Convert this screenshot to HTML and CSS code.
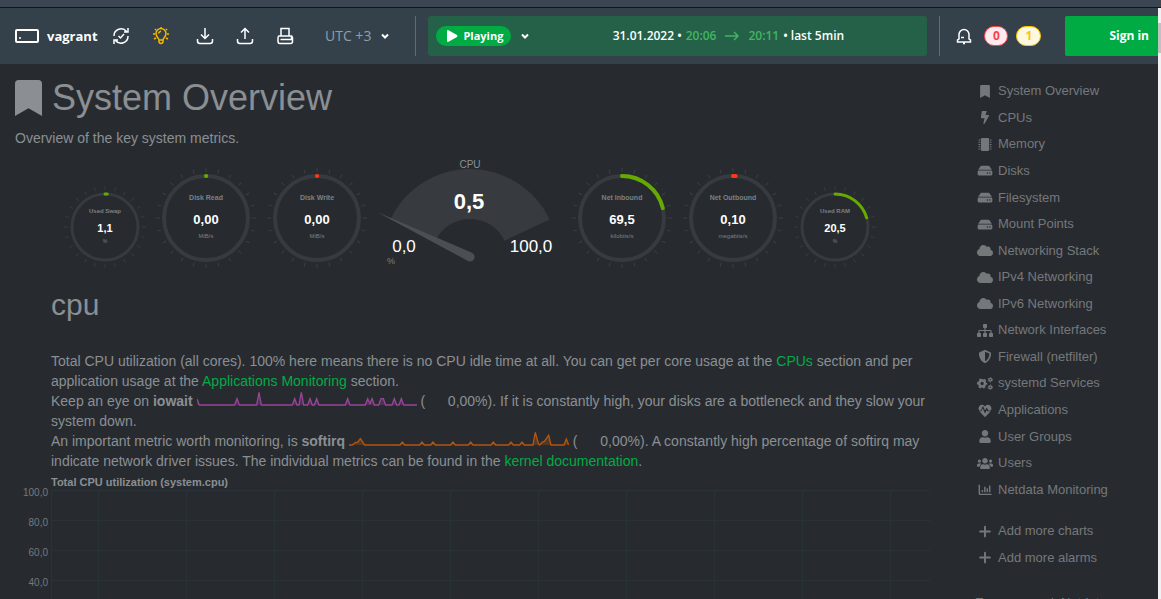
FILE: index.html
```html
<!DOCTYPE html>
<html lang="en">
<head>
<meta charset="utf-8">
<title>vagrant - System Overview</title>
<link rel="stylesheet" href="styles.css">
</head>
<body>
<svg class="defs" aria-hidden="true">
  <symbol id="bookmark" viewBox="0 0 384 512"><path d="M0 512V48C0 21.49 21.49 0 48 0h288c26.51 0 48 21.49 48 48v464L192 400 0 512z"/></symbol>
  <symbol id="bolt" viewBox="0 0 320 512"><path d="M296 160H180.6l42.6-129.8C227.2 15 215.7 0 200 0H56C44 0 33.8 8.9 32.2 20.8l-32 240C-1.7 275.2 9.5 288 24 288h118.7L96.6 482.5c-3.6 15.2 8 29.5 23.3 29.5 8.4 0 16.4-4.4 20.8-12l176-304c9.3-15.9-2.2-36-20.7-36z"/></symbol>
  <symbol id="chip" viewBox="0 0 512 512"><path d="M144 0h224a48 48 0 0 1 48 48v416a48 48 0 0 1-48 48H144a48 48 0 0 1-48-48V48a48 48 0 0 1 48-48z"/><path d="M0 80h72M0 168h72M0 256h72M0 344h72M0 432h72M440 80h72M440 168h72M440 256h72M440 344h72M440 432h72" stroke="currentColor" stroke-width="40"/></symbol>
  <symbol id="hdd" viewBox="0 0 576 512"><path d="M576 304v96c0 26.51-21.49 48-48 48H48c-26.51 0-48-21.49-48-48v-96c0-26.51 21.49-48 48-48h480c26.51 0 48 21.49 48 48zm-48-80a79.557 79.557 0 0 1 30.777 6.165L462.25 85.374A48.003 48.003 0 0 0 422.311 64H153.689a48 48 0 0 0-39.938 21.374L17.223 230.165A79.557 79.557 0 0 1 48 224h480zm-48 96c-17.673 0-32 14.327-32 32s14.327 32 32 32 32-14.327 32-32-14.327-32-32-32zm-96 0c-17.673 0-32 14.327-32 32s14.327 32 32 32 32-14.327 32-32-14.327-32-32-32z"/></symbol>
  <symbol id="cloud" viewBox="0 0 640 512"><path d="M537.6 226.6c4.1-10.7 6.4-22.4 6.4-34.6 0-53-43-96-96-96-19.7 0-38.1 6-53.3 16.2C367 64.2 315.3 32 256 32c-88.4 0-160 71.6-160 160 0 2.7.1 5.4.2 8.1C40.2 219.8 0 273.2 0 336c0 79.5 64.5 144 144 144h368c70.7 0 128-57.3 128-128 0-61.9-44-113.6-102.4-125.4z"/></symbol>
  <symbol id="sitemap" viewBox="0 0 640 512"><rect x="240" width="160" height="160" rx="30"/><rect y="352" width="160" height="160" rx="30"/><rect x="240" y="352" width="160" height="160" rx="30"/><rect x="480" y="352" width="160" height="160" rx="30"/><path d="M320 150v210M80 360v-80q0-24 24-24h432q24 0 24 24v80" fill="none" stroke="currentColor" stroke-width="48"/></symbol>
  <symbol id="shield" viewBox="0 0 512 512"><path d="M466.5 83.7l-192-80a48.15 48.15 0 0 0-36.9 0l-192 80C27.7 91.1 16 108.6 16 128c0 198.5 114.5 335.7 221.5 380.3 11.8 4.9 25.1 4.9 36.9 0C360.1 472.6 496 349.3 496 128c0-19.4-11.7-36.9-29.5-44.3zM256.1 446.3l-.1-381 175.9 73.3c-3.3 151.4-82.1 261.1-175.8 307.7z"/></symbol>
  <symbol id="cogs" viewBox="0 0 640 512"><g fill="none" stroke="currentColor"><circle cx="205" cy="256" r="118" stroke-width="100"/><circle cx="205" cy="256" r="180" stroke-width="50" pathLength="12" stroke-dasharray="1 1" stroke-dashoffset=".5"/><circle cx="530" cy="104" r="56" stroke-width="52"/><circle cx="530" cy="104" r="90" stroke-width="32" pathLength="12" stroke-dasharray="1 1"/><circle cx="530" cy="408" r="56" stroke-width="52"/><circle cx="530" cy="408" r="90" stroke-width="32" pathLength="12" stroke-dasharray="1 1"/></g></symbol>
  <symbol id="heart" viewBox="0 0 512 512"><path d="M320 244l-64 128-92-205-49 121H30l208 212q18 18 36 0l208-212H347zM473 74c-55-57-145-57-200 0l-17 18-17-18c-55-57-145-57-200 0-48 50-50 129-8 182h62l65-158q16-20 30 0l70 160 50-98q15-16 29 0l44 96h100c42-53 40-132-8-182z"/></symbol>
  <symbol id="user" viewBox="0 0 448 512"><path d="M224 256c70.7 0 128-57.3 128-128S294.7 0 224 0 96 57.3 96 128s57.3 128 128 128zm89.6 32h-16.7c-22.2 10.2-46.9 16-72.9 16s-50.6-5.8-72.9-16h-16.7C60.2 288 0 348.2 0 422.4V464c0 26.5 21.5 48 48 48h352c26.5 0 48-21.5 48-48v-41.6c0-74.2-60.2-134.4-134.4-134.4z"/></symbol>
  <symbol id="users" viewBox="0 0 640 512"><path d="M96 224c35.3 0 64-28.7 64-64s-28.7-64-64-64-64 28.7-64 64 28.7 64 64 64zm448 0c35.3 0 64-28.7 64-64s-28.7-64-64-64-64 28.7-64 64 28.7 64 64 64zm32 32h-64c-17.6 0-33.5 7.1-45.1 18.6 40.3 22.1 68.9 62 75.1 109.4h66c17.7 0 32-14.3 32-32v-32c0-35.3-28.7-64-64-64zm-256 0c61.9 0 112-50.1 112-112S381.9 32 320 32 208 82.1 208 144s50.1 112 112 112zm76.8 32h-8.3c-20.8 10-43.9 16-68.5 16s-47.6-6-68.5-16h-8.3C179.6 288 128 339.6 128 403.2V432c0 26.5 21.5 48 48 48h288c26.5 0 48-21.5 48-48v-28.8c0-63.6-51.6-115.2-115.2-115.2zm-223.7-13.4C161.5 263.1 145.6 256 128 256H64c-35.3 0-64 28.7-64 64v32c0 17.7 14.3 32 32 32h65.9c6.3-47.4 34.9-87.3 75.2-109.4z"/></symbol>
  <symbol id="bars" viewBox="0 0 512 512"><path d="M32 64v352q0 32 32 32h448M152 368v-96M248 368V144M344 368V208M440 368V96" fill="none" stroke="currentColor" stroke-width="56"/></symbol>
  <symbol id="plus" viewBox="0 0 448 512"><path d="M224 64v384M32 256h384" fill="none" stroke="currentColor" stroke-width="76" stroke-linecap="round"/></symbol>
  <symbol id="chevron" viewBox="0 0 8 8"><path d="M1 2.5 4 5.5 7 2.5" fill="none" stroke="currentColor" stroke-width="2"/></symbol>
</svg>

<div class="chrome-edge"></div>
<div class="viewport">
<div class="app">
  <header class="topbar">
    <div class="node">
      <svg class="node-icon" viewBox="0 0 24 14"><rect x="1" y="1" width="22" height="12" rx="1" fill="none" stroke="currentColor" stroke-width="2"/><circle cx="5" cy="9" r="1"/></svg>
      <span>vagrant</span>
    </div>
    <div class="tools">
      <button class="tool" aria-label="Check for updates"><svg viewBox="0 0 18 18"><path d="M2 9A7 7 0 0 1 14.5 4.5M16 1v4h-4M16 9A7 7 0 0 1 3.500 13.500M2 17v-4h4M6.500 9l2 2 3.500-4"/></svg></button>
      <button class="tool tool-tip" aria-label="News"><svg viewBox="0 0 18 18"><path d="M7 13c0-2-3-3-3-6.500a5 5 0 0 1 10 0C14 10 11 11 11 13v2q-2 3-4 0zM7 13h4M6.500 6.500Q7 4.500 9 4.200M9 1V0M3 2l1 1M15 2l-1 1M1 7h2M15 7h2M2 12l2-1M16 12l-2-1"/></svg></button>
    </div>
    <div class="tools tools-io">
      <button class="tool" aria-label="Import"><svg viewBox="0 0 18 18"><path d="M9 1v10M5 7.500l4 4 4-4M1.500 12v2q0 2.500 2.500 2.500h10q2.500 0 2.500-2.500v-2"/></svg></button>
      <button class="tool" aria-label="Export"><svg viewBox="0 0 18 18"><path d="M9 12V2M5 5.500l4-4 4 4M1.500 12v2q0 2.500 2.500 2.500h10q2.500 0 2.500-2.500v-2"/></svg></button>
      <button class="tool" aria-label="Print"><svg viewBox="0 0 18 18"><path d="M5 8.500V1.500h8v7M3 9h12.500v3.500h-11M15.500 9.500q1 0 1 1v4q0 2-2 2H4q-2 0-2-2V12q0-3 1-3"/></svg></button>
    </div>
    <button class="zone">UTC +3 <svg class="chevron"><use href="#chevron"/></svg></button>
    <div class="divider"></div>
    <div class="timebar">
      <button class="playing"><svg viewBox="0 0 12 12"><path d="M1 1q0-1 1-1l9 5q1 1 0 2l-9 5q-1 0-1-1z"/></svg>Playing</button>
      <button class="plain" aria-label="Playback options"><svg class="chevron"><use href="#chevron"/></svg></button>
      <button class="range"><span>31.01.2022 •</span><span class="time">20:06</span><svg class="arrow" viewBox="0 0 14 10"><path d="M0 5h13M9 1l4 4-4 4"/></svg><span class="time">20:11</span><span>• last 5min</span></button>
    </div>
    <div class="divider"></div>
    <div class="alarms">
      <button class="tool" aria-label="Alarms"><svg viewBox="0 0 18 18"><path d="M4 12V7.500a5 5 0 0 1 10 0V12l1.500 1v2h-13v-2zM6 10.500h3M8 16.500h2"/></svg></button>
      <span class="badge badge-red">0</span>
      <span class="badge badge-yellow">1</span>
    </div>
    <button class="signin">Sign in</button>
  </header>

  <div class="body">
    <main class="content">
      <h1><svg class="title-icon"><use href="#bookmark"/></svg>System Overview</h1>
      <p class="lead">Overview of the key system metrics.</p>

      <div class="gauges">
        <svg class="pie pie-small" viewBox="-46 -46 92 92"><circle class="ticks" r="39" pathLength="24"/><circle class="track" r="33"/><circle class="arc green" r="33" pathLength="100" stroke-dasharray="1.1 200"/><text class="name" y="-14">Used Swap</text><text class="value" y="5">1,1</text><text class="unit" y="16">%</text></svg>
        <svg class="pie" viewBox="-55 -56 111 111"><circle class="ticks" r="48" pathLength="24"/><circle class="track" r="42"/><circle class="arc green" r="42" pathLength="100" stroke-dasharray=".1 200"/><text class="name" y="-18">Disk Read</text><text class="value" y="6">0,00</text><text class="unit" y="20">MiB/s</text></svg>
        <svg class="pie" viewBox="-55 -56 111 111"><circle class="ticks" r="48" pathLength="24"/><circle class="track" r="42"/><circle class="arc red" r="42" pathLength="100" stroke-dasharray=".1 200"/><text class="name" y="-18">Disk Write</text><text class="value" y="6">0,00</text><text class="unit" y="20">MiB/s</text></svg>
        <svg class="dial" viewBox="-97 -99 194 115">
          <path class="face" d="M-79.600-37.500A88 88 0 0 1 79.600-37.500L34.400-16.200A38 38 0 0 0-34.400-16.200z"/>
          <path d="M-79-38-70-34" stroke="#2f5a96"/>
          <path class="needle" d="M-93-45 2-4.200A4.500 4.500 0 1 1-2 4z"/>
          <text class="dial-name" y="-89">CPU</text>
          <text class="dial-value" x="-1" y="-48">0,5</text>
          <text class="dial-limit" x="-66" y="-5">0,0</text>
          <text class="dial-limit" x="61" y="-5">100,0</text>
          <text class="dial-unit" x="-79" y="7">%</text>
        </svg>
        <svg class="pie" viewBox="-55 -56 111 111"><circle class="ticks" r="48" pathLength="24"/><circle class="track" r="42"/><circle class="arc green" r="42" pathLength="100" stroke-dasharray="21.200 200"/><text class="name" y="-18">Net Inbound</text><text class="value" y="6">69,5</text><text class="unit" y="20">kilobits/s</text></svg>
        <svg class="pie" viewBox="-55 -56 111 111"><circle class="ticks" r="48" pathLength="24"/><circle class="track" r="42"/><circle class="arc red" r="42" pathLength="100" stroke-dasharray="1 200"/><text class="name" y="-18">Net Outbound</text><text class="value" y="6">0,10</text><text class="unit" y="20">megabits/s</text></svg>
        <svg class="pie pie-small" viewBox="-46 -46 92 92"><circle class="ticks" r="39" pathLength="24"/><circle class="track" r="33"/><circle class="arc green" r="33" pathLength="100" stroke-dasharray="20.500 200"/><text class="name" y="-14">Used RAM</text><text class="value" y="5">20,5</text><text class="unit" y="16">%</text></svg>
      </div>

      <section class="submenu">
        <h2>cpu</h2>
        <p class="info">Total CPU utilization (all cores). 100% here means there is no CPU idle time at all. You can get per core usage at the <a href="#cpus">CPUs</a> section and per application usage at the <a href="#apps">Applications Monitoring</a> section.<br>
        Keep an eye on <b>iowait</b> <svg class="spark spark-iowait" viewBox="0 0 660 45"><path stroke="none" d="M0 42V24L7 42H113L120 23 127 42H179L186 4 193 42H286L293 23 300 42H306L313 4 320 42H332L339 23 346 42H352L359 23 366 42H445L452 23 459 42H505L512 23 519 38 525 23 532 42H545L552 23H559L566 42H585L592 23 599 42H606L613 23 620 42z"/><path fill="none" d="M0 24 7 42H113L120 23 127 42H179L186 4 193 42H286L293 23 300 42H306L313 4 320 42H332L339 23 346 42H352L359 23 366 42H445L452 23 459 42H505L512 23 519 38 525 23 532 42H545L552 23H559L566 42H585L592 23 599 42H606L613 23 620 42H660"/></svg> (<span class="live">0,00</span>%). If it is constantly high, your disks are a bottleneck and they slow your system down.<br>
        An important metric worth monitoring, is <b>softirq</b> <svg class="spark spark-softirq" viewBox="0 0 660 45"><path d="M0 42H10L20 34H26L34 23 47 42H153L160 33 167 42H212L219 33 226 42H245L252 33 259 42H305L312 33 319 42H358L365 33 372 42H426L433 33 440 42H479L486 33 493 42H512L519 33 526 42H552L559 4 568 38 572 42 580 33 586 31 599 13 606 42H645L652 24 659 42"/></svg> (<span class="live">0,00</span>%). A constantly high percentage of softirq may indicate network driver issues. The individual metrics can be found in the <a href="#kernel">kernel documentation</a>.</p>
      </section>

      <section class="chart">
        <div class="axis"><span>100,0</span><span>80,0</span><span>60,0</span><span>40,0</span></div>
        <div class="chart-main">
          <h3>Total CPU utilization (system.cpu)</h3>
          <div class="plot"></div>
        </div>
      </section>
    </main>

    <nav class="sidebar">
      <ul class="menu">
        <li><a href="#system"><svg><use href="#bookmark"/></svg>System Overview</a></li>
        <li><a href="#cpus"><svg><use href="#bolt"/></svg>CPUs</a></li>
        <li><a href="#mem"><svg><use href="#chip"/></svg>Memory</a></li>
        <li><a href="#disks"><svg><use href="#hdd"/></svg>Disks</a></li>
        <li><a href="#fs"><svg><use href="#hdd"/></svg>Filesystem</a></li>
        <li><a href="#mount"><svg><use href="#hdd"/></svg>Mount Points</a></li>
        <li><a href="#ip"><svg><use href="#cloud"/></svg>Networking Stack</a></li>
        <li><a href="#ipv4"><svg><use href="#cloud"/></svg>IPv4 Networking</a></li>
        <li><a href="#ipv6"><svg><use href="#cloud"/></svg>IPv6 Networking</a></li>
        <li><a href="#net"><svg><use href="#sitemap"/></svg>Network Interfaces</a></li>
        <li><a href="#netfilter"><svg><use href="#shield"/></svg>Firewall (netfilter)</a></li>
        <li><a href="#services"><svg><use href="#cogs"/></svg>systemd Services</a></li>
        <li><a href="#apps"><svg><use href="#heart"/></svg>Applications</a></li>
        <li><a href="#groups"><svg><use href="#user"/></svg>User Groups</a></li>
        <li><a href="#users"><svg><use href="#users"/></svg>Users</a></li>
        <li><a href="#netdata"><svg><use href="#bars"/></svg>Netdata Monitoring</a></li>
      </ul>
      <ul class="menu menu-more">
        <li><a href="#charts"><svg><use href="#plus"/></svg>Add more charts</a></li>
        <li><a href="#alarms"><svg><use href="#plus"/></svg>Add more alarms</a></li>
      </ul>
      <p class="note">Every second, Netdata</p>
    </nav>
  </div>
</div>
<div class="scrollbar"><div class="thumb"></div></div>
</div>
</body>
</html>
```
FILE: styles.css
```css
* { box-sizing: border-box; }

body {
  display: flex;
  flex-direction: column;
  height: 100vh;
  margin: 0;
  overflow: hidden;
  background: #272b30;
  color: #8b8f93;
  font: 14px/20px "Liberation Sans", Arial, sans-serif;
}

h1, h2, h3, p, ul { margin: 0; padding: 0; font-weight: 400; }
ul { list-style: none; }
a { color: #00ab44; text-decoration: none; }
svg { fill: currentColor; }
button {
  margin: 0;
  padding: 0;
  border: 0;
  background: none;
  color: inherit;
  font: inherit;
}
.defs { position: absolute; width: 0; height: 0; }

.chrome-edge {
  flex: none;
  height: 8px;
  background: #3b4652;
  border-bottom: 1px solid #14181c;
}
.viewport { display: flex; flex: 1; min-height: 0; }
.app { display: flex; flex: 1; flex-direction: column; min-width: 0; overflow: hidden; }
.scrollbar { flex: none; width: 3px; padding-top: 15px; background: #f1f1f1; }
.thumb { height: 30px; background: #c1c1c1; }

/* Top bar */
.topbar {
  display: flex;
  flex: none;
  align-items: center;
  height: 56px;
  padding-left: 15px;
  background: #35414a;
  color: #fff;
  font: 700 12px/20px "Open Sans", "Noto Sans", sans-serif;
}
.node { display: flex; align-items: center; gap: 8px; width: 97px; font-size: 13px; }
.node-icon { width: 24px; height: 14px; }
.tools { display: flex; gap: 22px; }
.tools-io { margin-left: 26px; }
.tool { display: flex; width: 18px; height: 18px; }
.tool svg { width: 18px; height: 18px; fill: none; stroke: currentColor; stroke-width: 1.5; }
.tool-tip { color: #f5b800; }
.zone {
  display: flex;
  align-items: center;
  gap: 10px;
  margin-left: 31px;
  color: #8f9ea8;
  font-size: 14px;
  font-weight: 400;
}
.chevron { width: 8px; height: 8px; color: #fff; }
.divider { width: 1px; height: 40px; margin: 0 12px; background: #5c6b75; }
.zone + .divider { margin-left: 26px; }
.timebar {
  display: flex;
  flex: 1;
  align-items: center;
  height: 40px;
  padding-left: 8px;
  border-radius: 3px;
  background: #256148;
}
.playing {
  display: flex;
  align-items: center;
  gap: 5px;
  height: 20px;
  padding: 0 8px 0 10px;
  border-radius: 10px;
  background: #00ab44;
  font-size: 11px;
}
.playing svg { width: 12px; height: 12px; }
.plain { display: flex; margin-left: 10px; }
.range { display: flex; flex: 1; align-items: center; justify-content: center; gap: 4px; font-weight: 600; }
.time { color: #42b464; }
.arrow { width: 14px; height: 10px; margin: 0 5px; fill: none; stroke: #42b464; stroke-width: 1.5; }
.alarms { display: flex; align-items: center; gap: 8px; margin-left: 3px; }
.alarms .tool { margin-right: 3px; }
.badge {
  width: 24px;
  height: 20px;
  border: 1px solid;
  border-radius: 10px;
  line-height: 18px;
  text-align: center;
}
.badge-red { background: #ffebef; color: #f64444; }
.badge-yellow { width: 25px; background: #fff8e1; color: #ffc300; }
.signin {
  height: 40px;
  margin-left: 24px;
  padding: 0 9px 0 44px;
  border-radius: 2px 0 0 2px;
  background: #00ab44;
}

/* Page body */
.body { display: flex; flex: 1; min-height: 0; overflow: hidden; }
.content { flex: 1; min-width: 0; padding: 14px 0 0 15px; }
h1 {
  display: flex;
  align-items: center;
  gap: 10px;
  font-size: 36px;
  line-height: 40px;
}
.title-icon { width: 27px; height: 36px; }
.lead { margin-top: 10px; }

/* Gauges */
.gauges { display: flex; align-items: flex-end; justify-content: center; margin-top: 10px; padding-right: 5px; }
.gauges svg { flex: none; }
.gauges text { text-anchor: middle; font-weight: 700; }
.pie { width: 111px; height: 111px; }
.pie-small { width: 92px; height: 92px; }
.ticks { fill: none; stroke: #3b3f44; stroke-width: 4; stroke-dasharray: 0.08 0.92; stroke-dashoffset: 0.04; }
.track { fill: none; stroke: #373a3f; stroke-width: 4; }
.arc { fill: none; stroke-width: 4; stroke-linecap: round; transform: rotate(-90deg); }
.pie-small .track, .pie-small .arc { stroke-width: 3; }
.green { stroke: #66aa00; }
.red { stroke: #fe3912; }
.name { fill: #7d8083; font-size: 7px; }
.value { fill: #fff; font-size: 13px; }
.gauges .unit { fill: #7d8083; font-size: 6px; font-weight: 400; }
.pie-small .name { font-size: 6px; }
.pie-small .value { font-size: 11px; }
.gauges .pie-small .unit { font-size: 5px; }
.dial { width: 194px; height: 115px; }
.face { fill: #373a3f; }
.needle { fill: #4b4e53; }
.gauges .dial-name { fill: #8b8f93; font-size: 10px; font-weight: 400; }
.dial-value { fill: #fff; font-size: 22px; }
.gauges .dial-limit { fill: #fff; font-size: 17px; font-weight: 400; }
.gauges .dial-unit { fill: #7d8083; font-size: 9px; font-weight: 400; }

/* Section text */
.submenu { padding-left: 36px; }
h2 { margin-top: 16px; font-size: 30px; line-height: 32px; }
.info { margin-top: 30px; }
.spark { width: 220px; height: 15px; stroke-width: 4; fill-opacity: 0.3; }
.spark-iowait { fill: #994499; stroke: #994499; }
.spark-softirq { fill: #b5560f; stroke: #b5560f; }
.live { display: inline-block; width: 50px; text-align: right; }

/* Chart */
.chart { display: flex; }
.axis {
  display: grid;
  grid-auto-rows: 30px;
  align-content: start;
  width: 36px;
  padding: 12px 3px 0 0;
  font-size: 10px;
  text-align: right;
  color: #75787c;
}
.chart-main { flex: 1; }
h3 { height: 19px; font-size: 11px; font-weight: 700; line-height: 22px; }
.plot {
  height: 150px;
  border-left: 1px solid #283237;
  background:
    repeating-linear-gradient(90deg, transparent 0 46px, #283237 46px 47px, transparent 47px 88px),
    repeating-linear-gradient(#283237 0 1px, transparent 1px 30px);
}

/* Sidebar */
.sidebar { flex: none; width: 228px; padding: 14px 0 0 45px; color: #75787b; font-size: 13px; }
.menu { display: grid; grid-auto-rows: 1fr; height: 425px; }
.menu a { display: flex; align-items: center; gap: 5px; height: 100%; padding-left: 2px; color: inherit; }
.menu svg { width: 16px; height: 13px; }
.menu-more { height: 53px; margin-top: 15px; }
.note { margin-top: 22px; }
```
